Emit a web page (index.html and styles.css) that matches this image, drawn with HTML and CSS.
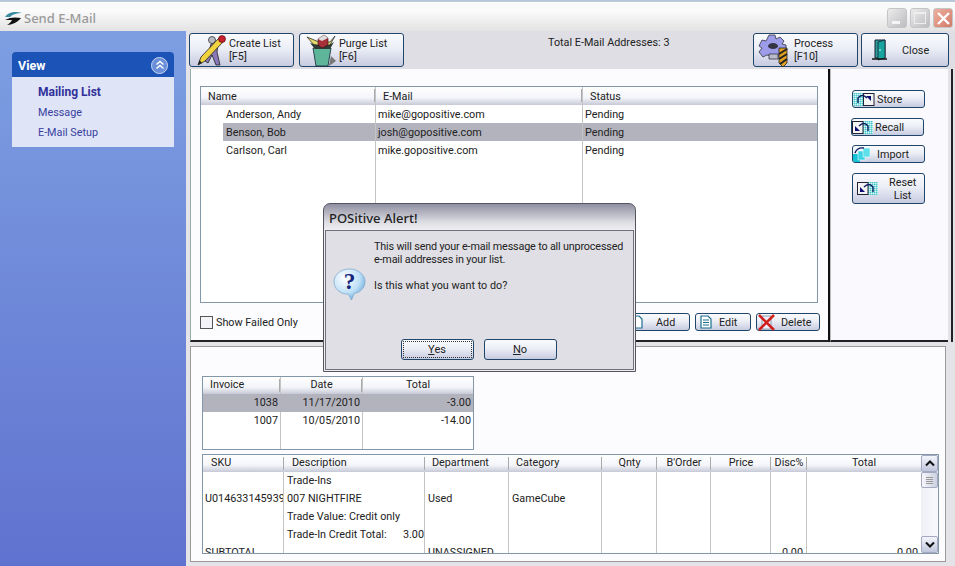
FILE: index.html
```html
<!DOCTYPE html>
<html lang="en">
<head>
<meta charset="utf-8">
<title>Send E-Mail</title>
<link rel="stylesheet" href="styles.css">
</head>
<body>
<div class="window">
  <header class="titlebar">
    <svg class="logo" width="17" height="14" viewBox="0 0 17 14"><path d="M0 6C3 1 10 0 17 2 12 2 8 3 5 6Z" fill="#3a8aa0"/><path d="M0 9C5 6 11 6 16 7 13 11 7 14 2 14 5 12 6 11 7 9 5 9 2 9 0 9Z" fill="#111"/></svg>
    <span class="title">Send E-Mail</span>
    <div class="winbtns">
      <span class="winbtn"><i class="g-min"></i></span>
      <span class="winbtn"><i class="g-max"></i></span>
      <span class="winbtn close"><svg width="13" height="13" viewBox="0 0 13 13"><path d="M1 1 12 12M12 1 1 12" stroke="#fff" stroke-width="2.4"/></svg></span>
    </div>
  </header>
  <div class="client">
    <aside class="sidebar">
      <section class="viewbox">
        <div class="viewhead"><span>View</span>
          <span class="chev"><svg width="12" height="12" viewBox="0 0 12 12"><path d="M2.5 5.5 6 2.5l3.500 3M2.500 9.500 6 6.500l3.500 3" fill="none" stroke="#fff" stroke-width="1.500"/></svg></span>
        </div>
        <nav class="viewbody">
          <a class="active">Mailing List</a>
          <a>Message</a>
          <a>E-Mail Setup</a>
        </nav>
      </section>
    </aside>
    <main class="main">
      <div class="toolbar">
        <button class="btn tool w105">
          <svg class="ticon" width="34" height="32" viewBox="0 0 34 32"><path d="M17 10 20 8 24 11 23 18 26 31 22 31 18 21 14 29 11 27 15 17Z" fill="#8a78b8" stroke="#222" stroke-width=".8"/><circle cx="18" cy="6" r="3.500" fill="#b9b9c4" stroke="#333" stroke-width=".8"/><path d="M4 31 7 23 25 4 29 8 11 27Z" fill="#f1d23f" stroke="#222" stroke-width=".8"/><path d="M4 31 5.500 26 8 29Z" fill="#222"/><circle cx="28" cy="5" r="3.500" fill="#c8202c" stroke="#400" stroke-width=".6"/></svg>
          <span class="tlabel">Create List<br>[F5]</span>
        </button>
        <button class="btn tool w105 purge">
          <svg class="ticon" width="32" height="33" viewBox="0 0 32 33"><path d="M8 14H26L23 32H11Z" fill="#5fb59a" stroke="#123" stroke-width=".8"/><path d="M26 22 31 27 24 32Z" fill="#777"/><path d="M2 3 9 11 25 11 30 2 25 8 14 8Z" fill="#e4d96a" stroke="#333" stroke-width=".8"/><path d="M5 9 10 15H25L29 8 24 11H12Z" fill="#2e3a33"/><path d="M13 5 19 1 23 4V11L17 14 13 11Z" fill="#a8303a" stroke="#311" stroke-width=".6"/><path d="M13 5 19 1 23 4 17 7Z" fill="#ddd"/></svg>
          <span class="tlabel">Purge List<br>[F6]</span>
        </button>
        <div class="total">Total E-Mail Addresses: 3</div>
        <button class="btn tool w105 process">
          <svg class="ticon" width="33" height="33" viewBox="0 0 33 33"><path d="M11 1H17L18 5 22 3 26 7 24 10 28 11V17L24 18 22 22H13L9 21 5 23 1 18 4 14 1 12 4 6 8 7Z" fill="#9c9ce8" stroke="#334" stroke-width=".8"/><ellipse cx="15" cy="12" rx="5" ry="3" fill="#334"/><path d="M11 20H20V25H11Z" fill="#bbc" stroke="#334" stroke-width=".8"/><path d="M21 14H29V29L25 33 21 29Z" fill="#e0a020" stroke="#222" stroke-width=".8"/><path d="M21 20 29 15M21 25 29 20M22 30 29 25" stroke="#222" stroke-width="2"/></svg>
          <span class="tlabel">Process<br>[F10]</span>
        </button>
        <button class="btn tool closebtn">
          <svg class="ticon door" width="16" height="22" viewBox="0 0 16 22"><path d="M3 1H13V19H3Z" fill="#2f9c9a" stroke="#123" stroke-width="1"/><path d="M6 3 13 1V19L6 21Z" fill="#18a5a0" stroke="#123" stroke-width=".8"/><path d="M0 20H15" stroke="#111" stroke-width="1.500"/><circle cx="8" cy="11" r=".8" fill="#fff"/></svg>
          <span class="clabel">Close</span>
        </button>
      </div>
      <div class="toprow">
        <section class="listpanel">
          <div class="grid maillist">
            <div class="ghead mail-cols">
              <span>Name</span><span>E-Mail</span><span>Status</span>
            </div>
            <div class="gbody">
              <div class="mail-cols row"><span class="ind">Anderson, Andy</span><span>mike@gopositive.com</span><span>Pending</span></div>
              <div class="mail-cols row selrow"><span class="ind sel-name">Benson, Bob</span><span>josh@gopositive.com</span><span>Pending</span></div>
              <div class="mail-cols row"><span class="ind">Carlson, Carl</span><span>mike.gopositive.com</span><span>Pending</span></div>
            </div>
            <div class="mail-cols filler"><span></span><span></span><span></span></div>
          </div>
          <div class="listfoot">
            <label class="check"><i></i>Show Failed Only</label>
            <div class="footbtns">
              <button class="btn small add"><svg width="12" height="14" viewBox="0 0 12 14"><path d="M1 1H8L11 4V13H1Z" fill="#fff" stroke="#1b6f8f" stroke-width="1.200"/></svg><span>Add</span></button>
              <button class="btn small edit"><svg width="12" height="14" viewBox="0 0 12 14"><path d="M1 1H8L11 4V13H1Z" fill="#fff" stroke="#1b6f8f" stroke-width="1.200"/><path d="M3 5H9M3 7.500H9M3 10H9" stroke="#1b6f8f"/></svg><span>Edit</span></button>
              <button class="btn small del"><svg width="18" height="17" viewBox="0 0 18 17"><path d="M4 2H13V15H4Z" fill="#eef" stroke="#789" stroke-width=".8"/><path d="M1 1 16 16M16 1 1 16" stroke="#d0201c" stroke-width="2.600"/></svg><span>Delete</span></button>
            </div>
          </div>
        </section>
        <aside class="sidepanel">
          <button class="btn side store">
            <svg width="22" height="15" viewBox="0 0 22 15"><defs><pattern id="dots" width="2" height="2" patternUnits="userSpaceOnUse"><rect width="2" height="2" fill="#8fe0e0"/><rect width="1" height="1" fill="#d8f4f4"/><rect x="1" y="1" width="1" height="1" fill="#4cc4cc"/></pattern></defs><rect x="0" y="1" width="10" height="13" fill="url(#dots)"/><rect x="10.500" y="1.500" width="10.500" height="12" fill="#f4f4f4" stroke="#223"/><path d="M13 4h5v5z" fill="#0b0b70"/><path d="M5 11V6Q9 1 14 6" fill="none" stroke="#0b1b60" stroke-width="1.400"/></svg>
            <span>Store</span>
          </button>
          <button class="btn side recall">
            <svg width="22" height="15" viewBox="0 0 22 15"><rect x="11" y="1" width="10" height="13" fill="url(#dots)"/><rect x=".5" y="1.500" width="10.500" height="12" fill="#f4f4f4" stroke="#223"/><path d="M8 11H3V6z" fill="#0b0b70"/><path d="M7 6Q12 1 16 6V11" fill="none" stroke="#0b1b60" stroke-width="1.400"/></svg>
            <span>Recall</span>
          </button>
          <button class="btn side import">
            <svg width="18" height="17" viewBox="0 0 18 17"><rect x="0" y="8" width="7" height="9" fill="#14c2d6"/><rect x="5" y="5" width="7" height="9" fill="#3cd4e4" stroke="#fff" stroke-width=".5"/><rect x="10" y="2" width="7" height="9" fill="#60e0ea" stroke="#fff" stroke-width=".5"/><path d="M2 7Q4 1 11 2" fill="none" stroke="#0b1b60" stroke-width="1.400"/></svg>
            <span>Import</span>
          </button>
          <button class="btn side reset">
            <svg width="22" height="15" viewBox="0 0 22 15"><rect x="11" y="1" width="10" height="13" fill="url(#dots)"/><rect x=".5" y="1.500" width="10.500" height="12" fill="#f4f4f4" stroke="#223"/><path d="M8 11H3V6z" fill="#0b0b70"/><path d="M7 6Q12 1 16 6V11" fill="none" stroke="#0b1b60" stroke-width="1.400"/></svg>
            <span>Reset<br>List</span>
          </button>
        </aside>
      </div>
      <section class="bottompanel">
        <div class="grid invoices">
          <div class="ghead inv-cols"><span>Invoice</span><span>Date</span><span>Total</span></div>
          <div class="inv-cols row selfull"><span>1038</span><span>11/17/2010</span><span>-3.00</span></div>
          <div class="inv-cols row"><span>1007</span><span>10/05/2010</span><span>-14.00</span></div>
          <div class="inv-cols filler"><span></span><span></span><span></span></div>
        </div>
        <div class="grid items">
          <div class="itemscroll">
            <div class="ghead item-cols">
              <span>SKU</span><span>Description</span><span>Department</span><span>Category</span><span>Qnty</span><span>B'Order</span><span>Price</span><span>Disc%</span><span>Total</span>
            </div>
            <div class="item-cols itembody">
              <div class="cell sku"><p>&nbsp;</p><p>U014633145939</p><p>&nbsp;</p><p>&nbsp;</p><p>SUBTOTAL</p></div>
              <div class="cell desc"><p>Trade-Ins</p><p>007 NIGHTFIRE</p><p>Trade Value: Credit only</p><p class="credit"><span>Trade-In Credit Total:</span><span>3.00</span></p></div>
              <div class="cell"><p>&nbsp;</p><p>Used</p><p>&nbsp;</p><p>&nbsp;</p><p>UNASSIGNED</p></div>
              <div class="cell"><p>&nbsp;</p><p>GameCube</p></div>
              <div class="cell"></div>
              <div class="cell"></div>
              <div class="cell"></div>
              <div class="cell num"><p>&nbsp;</p><p>&nbsp;</p><p>&nbsp;</p><p>&nbsp;</p><p>0.00</p></div>
              <div class="cell num"><p>&nbsp;</p><p>&nbsp;</p><p>&nbsp;</p><p>&nbsp;</p><p>0.00</p></div>
            </div>
          </div>
          <div class="scrollbar">
            <span class="sb-btn"><svg width="10" height="7" viewBox="0 0 10 7"><path d="M1 5.500 5 1.500l4 4" fill="none" stroke="#111" stroke-width="2"/></svg></span>
            <span class="sb-thumb"><i></i></span>
            <span class="sb-track"></span>
            <span class="sb-btn"><svg width="10" height="7" viewBox="0 0 10 7"><path d="M1 1.500 5 5.500l4-4" fill="none" stroke="#111" stroke-width="2"/></svg></span>
          </div>
        </div>
      </section>
    </main>
  </div>
  <div class="dialog">
    <div class="dlgtitle">POSitive Alert!</div>
    <div class="dlgbody">
      <div class="dlgmain">
        <svg class="qicon" width="33" height="33" viewBox="0 0 34 34">
          <defs><radialGradient id="qg" cx=".35" cy=".3" r=".8"><stop offset="0" stop-color="#fff"/><stop offset=".6" stop-color="#bfe0f6"/><stop offset="1" stop-color="#5f9fd6"/></radialGradient></defs>
          <path d="M17 1C26 1 33 7 33 14 33 21 27 26 22 26L19 33 16 27C7 27 1 21 1 14 1 7 8 1 17 1Z" fill="url(#qg)" stroke="#7fa8cf" stroke-width=".8"/>
          <text x="17" y="22" class="qmark">?</text>
        </svg>
        <div class="dlgtext">
          <p class="tight">This will send your e-mail message to all unprocessed<br>e-mail addresses in your list.</p>
          <p>Is this what you want to do?</p>
        </div>
      </div>
      <div class="dlgbtns">
        <button class="btn dbtn focus"><span><u>Y</u>es</span></button>
        <button class="btn dbtn"><span><u>N</u>o</span></button>
      </div>
    </div>
  </div>
</div>
</body>
</html>
```

FILE: styles.css
```css
* { box-sizing: border-box; }
html, body { margin: 0; padding: 0; }
body { width: 955px; height: 566px; overflow: hidden; background: #e4e4e8; font-family: Roboto, "Liberation Sans", sans-serif; font-size: 10.800px; color: #222; }
p { margin: 0; }
.window { position: relative; width: 955px; height: 566px; display: flex; flex-direction: column; overflow: hidden; }

.titlebar { height: 31px; flex: none; display: flex; align-items: center; padding: 3px 2px 0 5px; border-top: 2px solid #b9c8d8; background: linear-gradient(#f7f7f7, #fbfbfb 30%, #e3e3e3); box-shadow: inset 0 1px 0 #fff; }
.logo { flex: none; }
.title { margin-left: 2px; font-size: 13px; font-family: "Noto Sans", sans-serif; font-weight: 500; color: #9a9a9a; }
.winbtns { margin-left: auto; display: flex; gap: 3px; }
.winbtn { width: 20px; height: 20px; border: 1px solid #c5c5c8; border-radius: 3px; background: linear-gradient(135deg, #ececec, #bcbcc0); display: flex; align-items: center; justify-content: center; }
.winbtn.close { background: linear-gradient(135deg, #eeb0a0, #d27a68); }
.g-min { display: block; width: 8px; height: 3px; background: #f4f4f4; margin-top: 8px; margin-right: 3px; }
.g-max { display: block; width: 12px; height: 12px; border: 1px solid #eee; border-top-width: 2px; }

.client { flex: 1; display: flex; min-height: 0; }
.sidebar { width: 186px; flex: none; padding: 21px 12px 0; background: linear-gradient(#7d9fe2, #6072cf); }
.viewbox { width: 162px; }
.viewhead { height: 25px; display: flex; align-items: center; justify-content: space-between; padding: 1px 6px 0 6px; background: #1b54b6; border-radius: 4px 4px 0 0; color: #fff; font-weight: bold; font-size: 12.500px; }
.chev { width: 17px; height: 17px; border-radius: 50%; border: 1px solid #c8d6f4; background: #6b8ed8; display: flex; align-items: center; justify-content: center; }
.viewbody { height: 70px; background: #dfe5f7; padding: 8px 0 0 26px; display: flex; flex-direction: column; gap: 5px; color: #3a3f9e; font-size: 10.800px; }
.viewbody a { line-height: 15px; }
.viewbody .active { font-weight: bold; color: #31319a; font-size: 12px; }

.main { flex: 1; min-width: 0; display: flex; flex-direction: column; padding-left: 3px; background: #e4e4e8; }
.btn { display: inline-flex; align-items: center; padding: 0; margin: 0; font: inherit; color: #222; border: 1px solid #20456a; border-radius: 3px; background: linear-gradient(#fafbfe, #eceef6 45%, #c6cbe0); }
.toolbar { height: 38px; flex: none; display: flex; align-items: flex-start; padding: 2px 6px 0 0; background: #dedee4; }
.tool { height: 34px; flex: none; }
.w105 { width: 105px; margin-right: 5px; padding-left: 4px; }
.process { margin-right: 3px; }
.purge { padding-left: 5px; }
.tlabel { margin-left: 1px; text-align: left; line-height: 13px; }
.purge .tlabel { margin-left: 2px; }
.process .tlabel { margin-left: 3px; }
.total { flex: 1; padding: 3px 0 0 139px; }
.closebtn { width: 88px; padding-left: 10px; }
.door { margin-right: 14px; }

.toprow { height: 273px; width: 763px; flex: none; display: flex; margin-left: 1px; border-right: 2px solid #222; }
.listpanel { width: 640px; flex: none; background: #fcfcff; border-right: 2px solid #111; border-bottom: 2px solid #222; border-left: 1px solid #9aa; padding: 17px 0 0 9px; }
.grid { border: 1px solid #8298a8; background: #fff; overflow: hidden; }
.maillist { width: 618px; height: 217px; display: flex; flex-direction: column; }
.ghead { height: 18px; flex: none; background: linear-gradient(#fff, #f4f5fa 60%, #c6c9d6); }
.ghead span { display: block; text-align: center; line-height: 17px; position: relative; }
.ghead span:not(:last-child)::after { content: ""; position: absolute; right: 0; top: 2px; height: 13px; border-right: 1px solid #aaa; }
.mail-cols { display: grid; grid-template-columns: 175px 207px 1fr; }
.maillist .ghead span { text-align: left; padding: 1px 0 0 7px; }
.row { height: 18px; line-height: 18px; }
.gbody .row { line-height: 20px; }
.mail-cols > span { border-right: 1px solid #c4c4c4; }
.mail-cols > span:last-child { border-right: 0; }
.gbody .row span { padding-left: 2px; }
.gbody .row .ind { padding-left: 25px; }
.selrow { background: linear-gradient(to right, #fff 22px, #b3b3be 22px); }
.filler { flex: 1; }
.listfoot { display: flex; align-items: center; justify-content: space-between; height: 18px; margin-top: 10px; width: 620px; }
.check { display: flex; align-items: center; gap: 3px; }
.check i { width: 13px; height: 13px; display: block; background: #f4f4f8; border: 1px solid #555; }
.footbtns { display: flex; gap: 5px; }
.small { height: 18px; padding-left: 4px; }
.add { width: 64px; }
.edit { width: 56px; }
.del { width: 64px; padding-left: 1px; gap: 5px; }
.add span { margin-left: 13px; }
.edit span { margin-left: 7px; }

.sidepanel { width: 118px; flex: none; display: flex; flex-direction: column; align-items: flex-start; background: #fafafe; border-bottom: 2px solid #222; border-left: 1px solid #bbb; padding: 21px 0 0 21px; }
.side { width: 73px; height: 18px; flex: none; overflow: hidden; border-radius: 3px; gap: 2px; }
.store { margin-bottom: 10px; }
.recall { margin-bottom: 9px; margin-left: -1px; gap: 1px; }
.import { margin-bottom: 10px; padding-left: 0; gap: 6px; }
.reset { height: 31px; padding-left: 4px; gap: 10px; text-align: center; }
.reset span { line-height: 13px; }

.bottompanel { height: 216px; width: 756px; flex: none; margin: 4px 0 0 1px; background: #fcfcff; border: 1px solid #9a9a9a; padding: 29px 0 0 11px; display: flex; flex-direction: column; gap: 4px; }
.invoices { width: 272px; height: 74px; flex: none; display: flex; flex-direction: column; }
.invoices .ghead, .items .ghead { height: 17px; }
.invoices .ghead span, .items .ghead span { line-height: 16px; }
.inv-cols { display: grid; grid-template-columns: 78px 82px 1fr; }
.invoices .ghead span:first-child { text-align: left; padding-left: 7px; }
.invoices .row span { text-align: right; padding-right: 2px; }
.inv-cols > span { border-right: 1px solid #c4c4c4; }
.inv-cols > span:last-child { border-right: 0; }
.selfull { background: #b3b3be; }
.selfull > span { border-right-color: #b3b3be; }
.items { width: 737px; height: 100px; flex: none; display: flex; }
.itemscroll { flex: 1; min-width: 0; display: flex; flex-direction: column; overflow: hidden; }
.item-cols { display: grid; grid-template-columns: 81px 141px 84px 93px 55px 54px 60px 36px 1fr; }
.items .ghead span { white-space: nowrap; }
.items .ghead span:first-child { text-align: left; padding-left: 8px; }
.items .ghead span:nth-child(2) { text-align: left; padding-left: 8px; }
.items .ghead span:nth-child(3), .items .ghead span:nth-child(4) { text-align: left; padding-left: 7px; }
.itembody { flex: 1; min-height: 0; overflow: hidden; }
.cell { border-right: 1px solid #c4c4c4; overflow: hidden; white-space: nowrap; padding: 0 3px; }
.cell:last-child { border-right: 0; }
.cell p { height: 18px; line-height: 18px; }
.sku { padding-left: 2px; padding-right: 0; }
.num p { text-align: right; }
.credit { display: flex; justify-content: space-between; }
.credit span:last-child { margin-right: -3px; }
.scrollbar { width: 17px; flex: none; display: flex; flex-direction: column; background: linear-gradient(to right, #eef0f6, #f8f8fc); }
.sb-btn { height: 17px; flex: none; display: flex; align-items: center; justify-content: center; border: 1px solid #a4a8c0; border-radius: 2px; background: linear-gradient(#f4f5fb, #c0c6dc); }
.sb-thumb { height: 16px; flex: none; display: flex; align-items: center; justify-content: center; border: 1px solid #a4a8c0; border-radius: 2px; background: linear-gradient(to right, #f6f6fb, #ccd0e0); }
.sb-thumb i { width: 7px; height: 7px; display: block; background: repeating-linear-gradient(#999 0 1px, transparent 1px 2px); }
.sb-track { flex: 1; }

.dialog { position: absolute; left: 323px; top: 203px; width: 313px; height: 169px; border: 1px solid #55555f; border-radius: 7px 7px 0 0; background: linear-gradient(#8f8fa2, #dcdce2 18px, #efeff2 26px); display: flex; flex-direction: column; padding: 0 1px 1px; }
.dlgtitle { height: 26px; flex: none; padding: 5px 0 0 4px; font-family: "Noto Sans", sans-serif; font-size: 13px; font-weight: 500; color: #222; line-height: 18px; }
.dlgbody { flex: 1; background: #dfdfe5; border: 1px solid #70707a; display: flex; flex-direction: column; }
.dlgmain { flex: 1; display: flex; padding: 9px 0 0 7px; }
.qicon { flex: none; margin-top: 28px; }
.qmark { text-anchor: middle; font-family: "Liberation Serif", serif; font-size: 24px; font-weight: bold; fill: #14247c; }
.dlgtext { margin-left: 8px; line-height: 13px; }
.dlgtext p { margin-bottom: 13px; }
.dlgtext .tight { letter-spacing: -0.170px; }
.dlgbtns { height: 30px; flex: none; display: flex; justify-content: center; gap: 10px; padding-right: 2px; }
.dbtn { width: 73px; height: 21px; justify-content: center; font-size: 11px; }
.dbtn.focus { outline: 1px dotted #333; outline-offset: -3px; }
```
